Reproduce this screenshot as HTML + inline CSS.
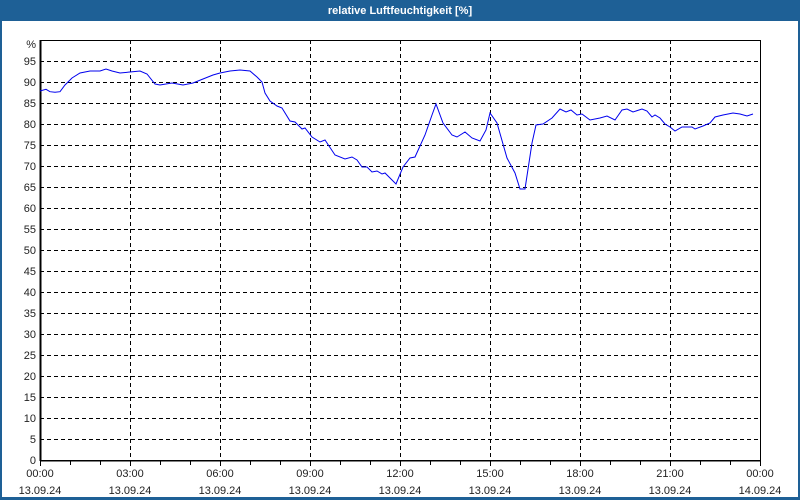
<!DOCTYPE html>
<html><head><meta charset="utf-8"><style>
html,body{margin:0;padding:0;width:800px;height:500px;overflow:hidden;background:#fff}
</style></head><body>
<svg width="800" height="500" xmlns="http://www.w3.org/2000/svg" font-family="Liberation Sans, DejaVu Sans, sans-serif" font-size="11">
<rect x="0" y="0" width="800" height="500" fill="#1e6096"/>
<rect x="2" y="21" width="796" height="476" fill="#fff"/>
<text x="400" y="14" fill="#fff" font-weight="bold" text-anchor="middle" font-size="11">relative Luftfeuchtigkeit [%]</text>
<g stroke="#000" stroke-width="1" stroke-dasharray="4,3" fill="none" shape-rendering="crispEdges">
<path d="M40 61.5H760M40 82.5H760M40 103.5H760M40 124.5H760M40 145.5H760M40 166.5H760M40 187.5H760M40 208.5H760M40 229.5H760M40 250.5H760M40 271.5H760M40 292.5H760M40 313.5H760M40 334.5H760M40 355.5H760M40 376.5H760M40 397.5H760M40 418.5H760M40 439.5H760"/>
<path d="M130.5 40V460M220.5 40V460M310.5 40V460M400.5 40V460M490.5 40V460M580.5 40V460M670.5 40V460"/>
</g>
<g stroke="#000" fill="none" shape-rendering="crispEdges">
<rect x="40.5" y="40.5" width="720" height="420" stroke-width="1"/>
<path d="M40.5 40V461" stroke-width="2"/>
<path d="M40 460.5H761" stroke-width="1.5"/>
<path d="M40.5 461v5M70.5 461v4M100.5 461v4M130.5 461v5M160.5 461v4M190.5 461v4M220.5 461v5M250.5 461v4M280.5 461v4M310.5 461v5M340.5 461v4M370.5 461v4M400.5 461v5M430.5 461v4M460.5 461v4M490.5 461v5M520.5 461v4M550.5 461v4M580.5 461v5M610.5 461v4M640.5 461v4M670.5 461v5M700.5 461v4M730.5 461v4M760.5 461v5"/>
</g>
<polyline fill="none" stroke="#0000ee" stroke-width="1" points="40,91 46,89.3 50,91.7 55,92.3 60,91.7 65,85 72,78 80,73 90,71 100,71 106,69 112,71 120,73 130,72 140,71 147,74 155,84 160,85 172,83 183,85 193,83 203,79 213,75 220,73 230,71 240,70 250,71 257,77 262,82 265,93 270,101 277,106 282,108 290,121 295,122 302,129 305,128 312,137 320,142 325,140 335,155 345,159 352,157 357,160 362,167 367,167 372,172 377,171 382,174 385,173 396,184 403,167 410,158 415,157 425,135 432,115 436,104 443,123 452,135 457,137 465,132 472,138 480,141 486,130 490,113 497,123 507,158 515,173 520,189 525,189 532,143 536,125 543,124 552,118 560,109 566,112 571,110 577,115 582,114 590,120 600,118 607,116 615,120 622,110 627,109 633,112 642,109 647,111 652,117 655,115 660,118 665,124 670,127 675,131 682,127 692,127 695,129 703,126 710,123 715,117 723,115 733,113 740,114 747,116 753,114"/>
<g fill="#222" text-anchor="end">
<text x="36" y="48">%</text>
<text x="36" y="65">95</text><text x="36" y="86">90</text><text x="36" y="107">85</text><text x="36" y="128">80</text><text x="36" y="149">75</text><text x="36" y="170">70</text><text x="36" y="191">65</text><text x="36" y="212">60</text><text x="36" y="233">55</text><text x="36" y="254">50</text><text x="36" y="275">45</text><text x="36" y="296">40</text><text x="36" y="317">35</text><text x="36" y="338">30</text><text x="36" y="359">25</text><text x="36" y="380">20</text><text x="36" y="401">15</text><text x="36" y="422">10</text><text x="36" y="443">5</text><text x="36" y="464">0</text>
</g>
<g fill="#222" text-anchor="middle">
<text x="40" y="477">00:00</text><text x="40" y="494">13.09.24</text>
<text x="130" y="477">03:00</text><text x="130" y="494">13.09.24</text>
<text x="220" y="477">06:00</text><text x="220" y="494">13.09.24</text>
<text x="310" y="477">09:00</text><text x="310" y="494">13.09.24</text>
<text x="400" y="477">12:00</text><text x="400" y="494">13.09.24</text>
<text x="490" y="477">15:00</text><text x="490" y="494">13.09.24</text>
<text x="580" y="477">18:00</text><text x="580" y="494">13.09.24</text>
<text x="670" y="477">21:00</text><text x="670" y="494">13.09.24</text>
<text x="760" y="477">00:00</text><text x="760" y="494">14.09.24</text>
</g>
</svg>
</body></html>
